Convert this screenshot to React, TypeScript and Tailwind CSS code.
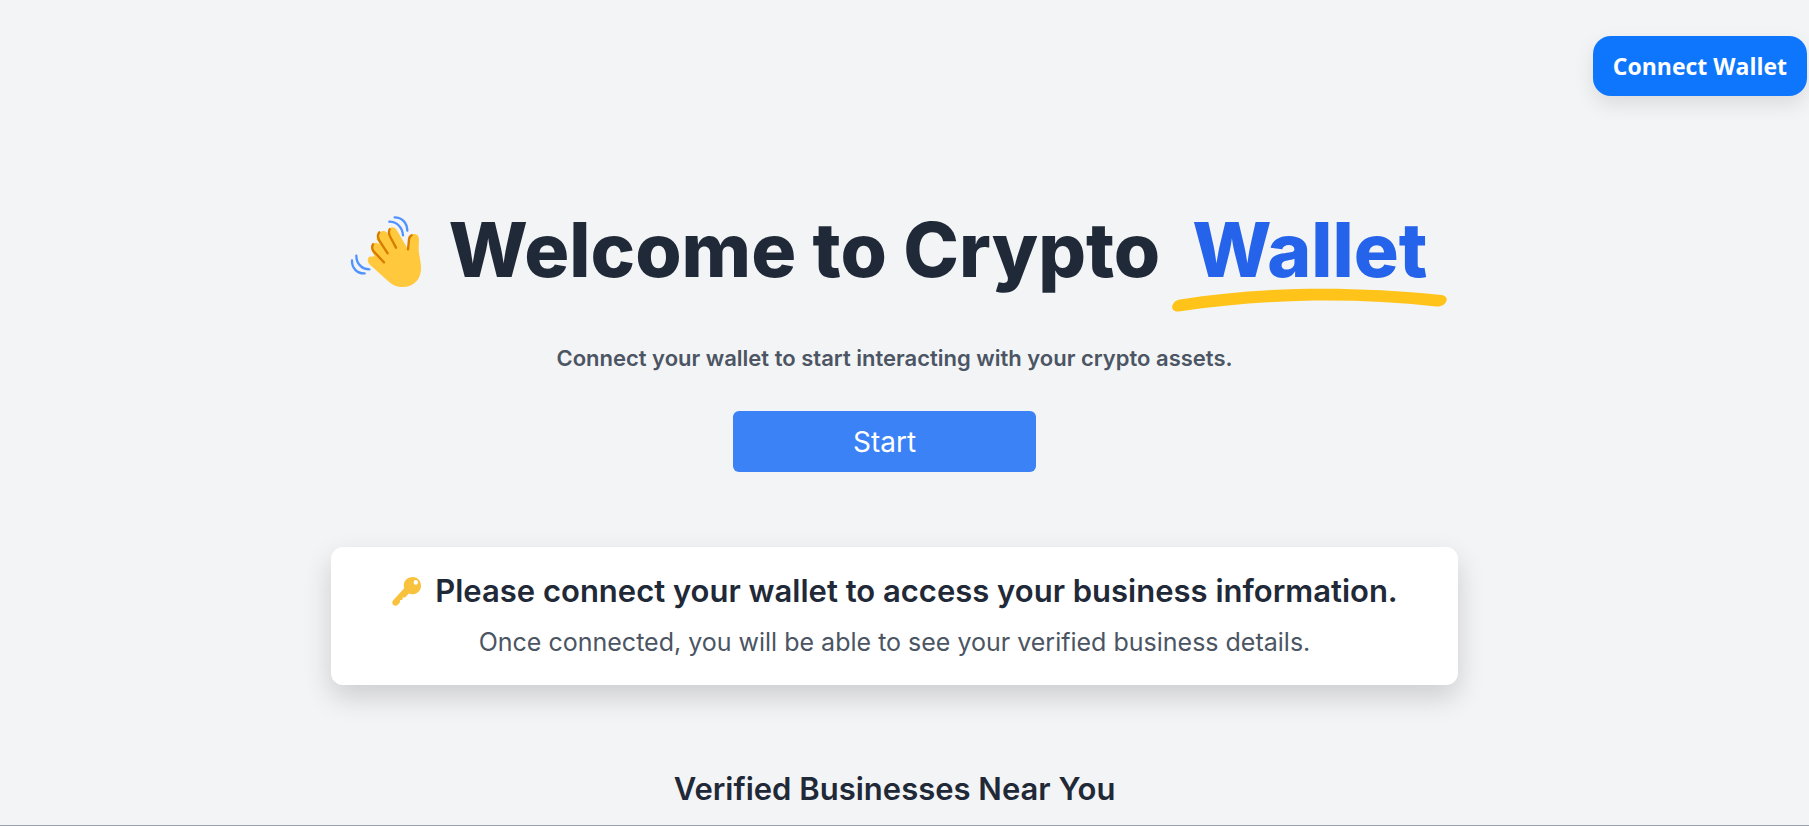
function WavingHand() {
  return (
    <svg viewBox="21 0 309 300" className="h-[100px] w-[103px] shrink-0" role="img" aria-label="Waving hand">
      <path
        d="M102 170 C94 182 100 190 110 199 L158 242 C174 257 190 262 207 261 C240 259 260 234 258 200 C257 180 252 166 251 150 L252 118 C252 96 224 97 221 117 L218 146 L187 93 C176 72 154 84 161 104 C148 84 122 98 129 115 L133 133 C120 120 104 134 109 150 L119 169 Z"
        fill="#ffc83d"
      />
      <path d="M133 99 C150 84 158 100 160 108 L183 146 L160 162 L124 118 Z" fill="#ffc83d" />
      <g fill="none" stroke="#d67d00" strokeWidth="7" strokeLinecap="round" strokeLinejoin="round">
        <path d="M164 88 C160 96 162 104 166 111 L183 143" />
        <path d="M133 97 C127 104 128 112 132 120 L158 160" />
        <path d="M114 133 C110 140 111 147 116 154 L147 187" />
        <path d="M230 106 C225 109 222 113 222 119 L219 148" />
      </g>
      <g fill="none" stroke="#5092ff" strokeWidth="7" strokeLinecap="round">
        <path d="M163 65 C184 65 202 80 204 106" />
        <path d="M179 52 C200 52 216 67 217 92" />
        <path d="M64 167 C64 190 80 208 103 208" />
        <path d="M51 181 C50 204 66 221 89 220" />
      </g>
    </svg>
  );
}

function KeyIcon() {
  return (
    <svg viewBox="0 0 32 32" className="size-8 shrink-0" role="img" aria-label="Key">
      <path
        d="M22 2 C16 2 12.500 6 12.800 11 C12.900 12 13 12.500 13.200 13.200 L2 25.500 C1 26.800 1 28.800 2.300 30 C3.700 31.200 5.600 31 6.800 29.800 L9 27.300 L9 25.200 L11.500 24.800 L11.600 22.600 L14 22.500 L17.800 18.600 C19 19.100 20.500 19.300 22 19.200 C26.800 18.900 30 15.200 30 10.700 C30 5.700 26.400 2 22 2 Z M24.800 5 a2.200 2.400 0 1 1 0 4.800 a2.200 2.400 0 1 1 0 -4.800 Z"
        fill="#f9c23c"
        fillRule="evenodd"
      />
    </svg>
  );
}

function Underline() {
  return (
    <svg
      viewBox="0 0 280 24"
      preserveAspectRatio="none"
      className="absolute inset-x-0 top-full h-6 w-full"
      aria-hidden="true"
    >
      <path
        d="M8 11.500 C86 -1 178 -3 274 7 C278 7.500 280 9.500 279.500 12 C279 16 274 19 269 18.500 C180 9 92 11 7 23.500 C2 24 -1 21 0.500 17 C2 14 4 12 8 11.500 Z"
        fill="#ffc31a"
      />
    </svg>
  );
}

export default function App() {
  return (
    <div className="min-h-screen bg-gray-100 font-['Inter',sans-serif] text-[#1f2937]">
      <header className="flex justify-end pt-9 pr-0.5">
        <button
          type="button"
          className="h-[60px] rounded-[18px] bg-[#0e76fd] px-5 font-['Open_Sans',sans-serif] text-[23px] font-bold text-white shadow-[0_8px_20px_rgba(0,0,0,0.1)]"
        >
          Connect Wallet
        </button>
      </header>

      <main className="pt-[104px]">
        <div className="flex flex-col items-center pr-5">
          <h1 className="flex items-center text-[75px] leading-[76px] font-extrabold">
            <WavingHand />
            <span className="ml-1">Welcome to Crypto</span>
            <span className="relative ml-3 px-5 text-[#2563eb]">
              Wallet
              <Underline />
            </span>
          </h1>
          <p className="mt-10 text-[22px] leading-9 font-semibold text-[#4b5563]">
            Connect your wallet to start interacting with your crypto assets.
          </p>
          <button
            type="button"
            className="mt-[35px] mr-5 h-[61px] w-[303px] rounded-md bg-[#3b82f6] text-[28px] text-white"
          >
            Start
          </button>

          <section className="mt-[75px] w-full max-w-[1127px] rounded-xl bg-white px-12 pt-6 pb-6 text-center shadow-[0_12px_28px_rgba(0,0,0,0.16)]">
            <h2 className="flex items-center justify-center gap-3 text-[31px] leading-10 font-semibold">
              <KeyIcon />
              Please connect your wallet to access your business information.
            </h2>
            <p className="mt-3 text-[25px] leading-[38px] text-[#4b5563]">
              Once connected, you will be able to see your verified business details.
            </p>
          </section>

          <h2 className="mt-[84px] text-[31px] leading-10 font-semibold">Verified Businesses Near You</h2>
        </div>
        <hr className="mt-4 border-gray-400" />
      </main>
    </div>
  );
}
